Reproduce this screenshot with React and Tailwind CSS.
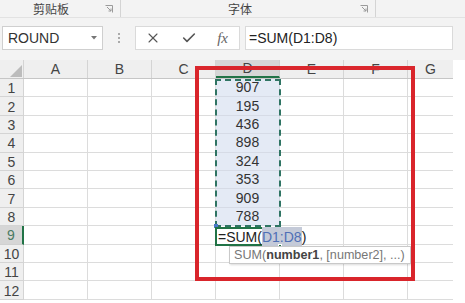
import React from "react";
import { X, Check } from "lucide-react";

const cols = [
  { n: "A", w: "w-[64px]" },
  { n: "B", w: "w-[64px]" },
  { n: "C", w: "w-[64px]" },
  { n: "D", w: "w-[64px]" },
  { n: "E", w: "w-[64px]" },
  { n: "F", w: "w-[64px]" },
  { n: "G", w: "w-[45px]" },
];
const values = { 1: 907, 2: 195, 3: 436, 4: 898, 5: 324, 6: 353, 7: 909, 8: 788 };
const rows = [1, 2, 3, 4, 5, 6, 7, 8, 9, 10, 11, 12];

function Launcher() {
  return (
    <svg width="8" height="8" viewBox="0 0 8 8" className="shrink-0">
      <path d="M0.5 0.5 H7.5 V7.5" fill="none" stroke="#9a9a9a" strokeWidth="1" />
      <path d="M2 2 L6 6 M6 3.5 V6 H3.5" fill="none" stroke="#9a9a9a" strokeWidth="1" />
    </svg>
  );
}

export default function App() {
  return (
    <div
      className="relative w-[465px] h-[303px] overflow-hidden bg-white text-[#333]"
      style={{ fontFamily: '"Liberation Sans", "Noto Sans CJK SC", sans-serif' }}
    >
      {/* Ribbon group labels */}
      <div className="flex h-[18px] bg-[#f3f3f3] border-b border-[#e2e2e2] text-[12px] text-[#444]">
        <div className="flex items-center w-[121px] border-r border-[#d4d4d4] pl-[33px] pr-[7px]">
          <span className="leading-none" style={{ fontFamily: '"Noto Sans CJK SC", sans-serif' }}>剪贴板</span>
          <span className="ml-auto"><Launcher /></span>
        </div>
        <div className="flex items-center w-[255px] border-r border-[#d4d4d4] pl-[107px] pr-[7px]">
          <span className="leading-none" style={{ fontFamily: '"Noto Sans CJK SC", sans-serif' }}>字体</span>
          <span className="ml-auto"><Launcher /></span>
        </div>
      </div>

      {/* Formula bar */}
      <div className="flex items-center h-[42px] bg-[#f3f3f3] pl-[2px] pb-[2px]">
        <div className="flex items-center w-[101px] h-[24px] bg-white border border-[#cfcfcf] pl-[5px] pr-[5px]">
          <span className="text-[14px] text-[#333]">ROUND</span>
          <svg width="6" height="4" viewBox="0 0 6 4" className="ml-auto">
            <path d="M0 0 H6 L3 3.5 Z" fill="#777" />
          </svg>
        </div>
        <div className="flex flex-col items-center justify-center gap-[2px] w-[32px] h-[24px]">
          <span className="w-[2px] h-[2px] bg-[#aaa]" />
          <span className="w-[2px] h-[2px] bg-[#aaa]" />
          <span className="w-[2px] h-[2px] bg-[#aaa]" />
        </div>
        <div className="flex items-center justify-between w-[105px] h-[24px] bg-white border border-[#dadada] pl-[9px] pr-[11px]">
          <X size={16} strokeWidth={1.6} color="#555" />
          <Check size={16} strokeWidth={2.4} color="#555" />
          <span
            className="italic text-[15px] text-[#666]"
            style={{ fontFamily: '"Liberation Serif", serif' }}
          >
            fx
          </span>
        </div>
        <div className="flex items-center w-[208px] grow-0 shrink-0 h-[24px] ml-[5px] bg-white border border-[#dadada] pl-[3px]">
          <span className="text-[14px] text-[#222]">=SUM(D1:D8)</span>
        </div>
      </div>

      {/* Grid */}
      <div className="w-[453px]">
        {/* header row */}
        <div className="flex h-[19px] bg-[#efefef] border-b border-[#c6c6c6]">
          <div className="relative w-[24px] border-r border-[#d4d4d4]">
            <svg width="24" height="19" viewBox="0 0 24 19" className="absolute left-0 top-0">
              <polygon points="22,5 22,17 10,17" fill="#bcbcbc" />
            </svg>
          </div>
          {cols.map((c, i) => (
            <div
              key={c.n}
              className={
                c.n === "D"
                  ? `${c.w} flex items-center justify-center text-[14px] text-[#444] bg-[#d6d6d6] border-b-2 border-[#217346] border-r border-r-[#cfcfcf]`
                  : i === cols.length - 1
                  ? `${c.w} flex items-center justify-center text-[14px] text-[#444]`
                  : `${c.w} flex items-center justify-center text-[14px] text-[#444] border-r border-[#d4d4d4]`
              }
            >
              {c.n}
            </div>
          ))}
        </div>

        {rows.map((r) => (
          <div key={r} className="flex h-[18.4px]">
            <div
              className={
                r === 9
                  ? "w-[24px] flex items-center justify-center pt-[2px] text-[14px] text-[#4a7a62] bg-[#d6d6d6] border-r-2 border-r-[#217346] border-b border-[#d0d0d0]"
                  : "w-[24px] flex items-center justify-center pt-[2px] text-[14px] text-[#444] bg-[#efefef] border-r border-b border-[#d4d4d4]"
              }
            >
              {r}
            </div>
            {cols.map((c, i) => {
              const isD = c.n === "D" && values[r];
              const last = i === cols.length - 1;
              return (
                <div
                  key={c.n}
                  className={
                    isD
                      ? `${c.w} flex items-center justify-center text-[14px] text-[#333] bg-[#e4eaf5] border-r border-b border-[#d6dbe6]`
                      : last
                      ? `${c.w} border-b border-[#dcdcdc]`
                      : `${c.w} border-r border-b border-[#dcdcdc]`
                  }
                >
                  {isD ? values[r] : null}
                </div>
              );
            })}
          </div>
        ))}
      </div>

      {/* Copy/reference marquee around D1:D8 */}
      <div className="absolute left-[215px] top-[79px] w-[66px] h-[148px] border-2 border-dashed border-[#2f7463] pointer-events-none" />
      <div className="absolute left-[214px] top-[224px] w-[4px] h-[4px] bg-[#4a78c8]" />

      {/* Editing cell D9 */}
      <div className="absolute left-[215px] top-[227px] w-[66px] h-[19px] border-2 border-[#217346] bg-white">
        <div className="absolute left-[1px] top-[0px] h-[16px] flex items-center whitespace-nowrap text-[14px] text-[#222]">
          <span>=SUM(</span>
          <span className="bg-[#c4cad8] text-[#4f6fb6]">D1:D8</span>
          <span>)</span>
        </div>
      </div>
      <div className="absolute left-[278px] top-[244px] w-[4px] h-[4px] bg-[#217346] border border-white" />

      {/* Function tooltip */}
      <div className="absolute left-[229px] top-[246px] w-[182px] h-[18px] flex items-center pl-[4px] bg-white border border-[#c9c9c9] shadow-[1px_1px_2px_rgba(0,0,0,0.15)] text-[12.6px] text-[#777] whitespace-nowrap">
        SUM(<b className="font-bold text-[#444]">number1</b>, [number2], ...)
      </div>

      {/* Red annotation box */}
      <div className="absolute left-[195px] top-[66px] w-[220px] h-[215px] border-[4px] border-[#d9252b] pointer-events-none" />
    </div>
  );
}
